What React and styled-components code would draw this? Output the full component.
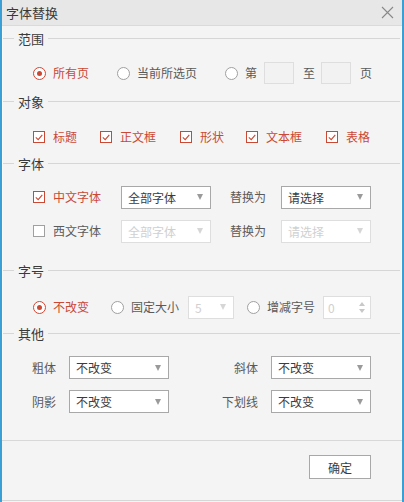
import React from "react";
import styled, { createGlobalStyle, css } from "styled-components";

const RED = "#cb4834";

const GlobalStyle = createGlobalStyle`
  html, body {
    margin: 0;
    padding: 0;
    background: #f4f4f4;
  }
  body {
    font-family: "Noto Sans CJK SC", "Microsoft YaHei", sans-serif;
  }
  * {
    box-sizing: border-box;
  }
`;

const Window = styled.div`
  width: 404px;
  height: 502px;
  display: flex;
  flex-direction: column;
  background: #f4f4f4;
  border-left: 2px solid #3a9fd4;
  border-right: 2px solid #3a9fd4;
  padding-bottom: 1px;
`;

const TitleBar = styled.div`
  height: 26px;
  flex: none;
  display: flex;
  align-items: center;
  justify-content: space-between;
  padding: 0 8px 0 4px;
  background: #e7e7e7;
  border-bottom: 1px solid #dadada;
`;

const Title = styled.span`
  font-size: 13px;
  color: #3a3a3a;
  line-height: 1;
`;

const Close = styled.button`
  width: 14px;
  height: 14px;
  padding: 0;
  border: none;
  background: none;
  display: flex;
  align-items: center;
  justify-content: center;
`;

const Panel = styled.div`
  flex: none;
  padding: 2px 0 27px;
  border-bottom: 1px solid #d8d8d8;
  box-shadow: inset 5px 0 0 -4px #fbfbfb, inset -2px 0 0 -1px #fbfbfb;
`;

const Legend = styled.div`
  display: flex;
  align-items: center;
  height: 20px;
  margin-top: ${(p) => p.$top || 0}px;
  font-size: 13px;
  color: #3a3a3a;

  &::before,
  &::after {
    content: "";
    height: 1px;
    background: #d6d6d6;
  }
  &::before {
    width: 11px;
    margin: 0 4px 0 1px;
  }
  &::after {
    flex: 1;
    margin: 0 2px 0 4px;
  }
`;

const Row = styled.div`
  display: flex;
  align-items: center;
  height: 22px;
  margin-top: ${(p) => p.$top || 0}px;
  padding-left: 31px;
  font-size: 12px;
  color: #5a5a5a;
`;

const Label = styled.span`
  color: ${(p) => (p.$active ? RED : "#5a5a5a")};
  margin-right: ${(p) => p.$gap || 0}px;
  white-space: nowrap;
  line-height: 1;
`;

const Radio = styled.span`
  width: 13px;
  height: 13px;
  border-radius: 50%;
  flex: none;
  background: #fff;
  border: 1px solid ${(p) => (p.$checked ? RED : "#a0a0a0")};
  margin-right: 7px;
  display: flex;
  align-items: center;
  justify-content: center;

  ${(p) =>
    p.$checked &&
    css`
      &::after {
        content: "";
        width: 5px;
        height: 5px;
        border-radius: 50%;
        background: ${RED};
      }
    `}
`;

const Check = styled.span`
  width: 12px;
  height: 12px;
  flex: none;
  background: #fff;
  border: 1px solid ${(p) => (p.$checked ? RED : "#a0a0a0")};
  margin-right: 8px;
  display: flex;
  align-items: center;
  justify-content: center;
`;

const Box = styled.span`
  width: ${(p) => p.$w}px;
  height: 22px;
  flex: none;
  background: #f2f2f2;
  border: 1px solid #dedede;
  margin-right: ${(p) => p.$gap || 0}px;
`;

const Select = styled.div`
  width: ${(p) => p.$w}px;
  height: 23px;
  flex: none;
  display: flex;
  align-items: center;
  justify-content: space-between;
  padding: 0 7px 0 6px;
  background: #fff;
  border: 1px solid ${(p) => (p.$disabled ? "#dedede" : "#a8a8a8")};
  color: ${(p) => (p.$disabled ? "#d0d0d0" : "#3c3c3c")};
  font-size: 12px;
  margin-right: ${(p) => p.$gap || 0}px;

  &::after {
    content: "";
    border-left: 3.5px solid transparent;
    border-right: 3.5px solid transparent;
    border-top: 6px solid ${(p) => (p.$disabled ? "#d6d6d6" : "#9a9a9a")};
  }
`;

const Spin = styled.div`
  width: 48px;
  height: 23px;
  flex: none;
  display: flex;
  align-items: center;
  justify-content: space-between;
  padding: 0 5px 0 4px;
  background: #fff;
  border: 1px solid #dedede;
  color: #d0d0d0;
  font-size: 12px;
`;

const SpinArrows = styled.span`
  display: flex;
  flex-direction: column;
  gap: 3px;
`;

const Arrow = styled.span`
  border-left: 3px solid transparent;
  border-right: 3px solid transparent;
  ${(p) =>
    p.$up
      ? css`border-bottom: 4px solid #c8c8c8;`
      : css`border-top: 4px solid #c8c8c8;`}
`;

const Grid = styled.div`
  display: grid;
  grid-template-columns: 24px 100px 76px 100px;
  column-gap: 13px;
  row-gap: 11px;
  align-items: center;
  margin-top: 13px;
  padding-left: 30px;
  font-size: 12px;
  color: #5a5a5a;
`;

const GridLabel = styled.span`
  text-align: ${(p) => (p.$right ? "right" : "left")};
  white-space: nowrap;
`;

const Footer = styled.div`
  flex: 1;
  display: flex;
  justify-content: flex-end;
  align-items: flex-start;
  padding: 14px 31px 0 0;
  border-bottom: 1px solid #d6d6d6;
`;

const Button = styled.button`
  width: 62px;
  height: 24px;
  background: #fff;
  border: 1px solid #a8a8a8;
  font-family: inherit;
  font-size: 12px;
  color: #3c3c3c;
  padding: 0;
`;

function CheckMark() {
  return (
    <svg width="8" height="7" viewBox="0 0 8 7">
      <path d="M0.8 3.3 L3.2 5.6 L7.3 0.8" fill="none" stroke={RED} strokeWidth="1.1" />
    </svg>
  );
}

function CheckItem({ label, checked = true, gap }) {
  return (
    <>
      <Check $checked={checked}>{checked && <CheckMark />}</Check>
      <Label $active={checked} $gap={gap}>
        {label}
      </Label>
    </>
  );
}

function RadioItem({ label, checked, gap }) {
  return (
    <>
      <Radio $checked={checked} />
      <Label $active={checked} $gap={gap}>
        {label}
      </Label>
    </>
  );
}

export default function App() {
  return (
    <>
      <GlobalStyle />
      <Window>
        <TitleBar>
          <Title>字体替换</Title>
          <Close aria-label="关闭">
            <svg width="13" height="13" viewBox="0 0 13 13">
              <path d="M1 1 L12 12 M12 1 L1 12" stroke="#888" strokeWidth="1.1" />
            </svg>
          </Close>
        </TitleBar>

        <Panel>
          <Legend>范围</Legend>
          <Row $top={14}>
            <RadioItem label="所有页" checked gap={28} />
            <RadioItem label="当前所选页" gap={28} />
            <RadioItem label="第" gap={7} />
            <Box $w={30} $gap={9} />
            <Label $gap={6}>至</Label>
            <Box $w={30} $gap={9} />
            <Label>页</Label>
          </Row>

          <Legend $top={7}>对象</Legend>
          <Row $top={15}>
            <CheckItem label="标题" gap={23} />
            <CheckItem label="正文框" gap={24} />
            <CheckItem label="形状" gap={22} />
            <CheckItem label="文本框" gap={24} />
            <CheckItem label="表格" />
          </Row>

          <Legend $top={5}>字体</Legend>
          <Row $top={13}>
            <CheckItem label="中文字体" gap={20} />
            <Select $w={90} $gap={19}>全部字体</Select>
            <Label $gap={15}>替换为</Label>
            <Select $w={90}>请选择</Select>
          </Row>
          <Row $top={12}>
            <CheckItem label="西文字体" checked={false} gap={20} />
            <Select $w={90} $gap={19} $disabled>
              全部字体
            </Select>
            <Label $gap={15}>替换为</Label>
            <Select $w={90} $disabled>
              请选择
            </Select>
          </Row>

          <Legend $top={18}>字号</Legend>
          <Row $top={16}>
            <RadioItem label="不改变" checked gap={22} />
            <RadioItem label="固定大小" gap={9} />
            <Select $w={46} $gap={13} $disabled>
              5
            </Select>
            <RadioItem label="增减字号" gap={8} />
            <Spin>
              0
              <SpinArrows>
                <Arrow $up />
                <Arrow />
              </SpinArrows>
            </Spin>
          </Row>

          <Legend $top={5}>其他</Legend>
          <Grid>
            <GridLabel>粗体</GridLabel>
            <Select $w={100}>不改变</Select>
            <GridLabel $right>斜体</GridLabel>
            <Select $w={100}>不改变</Select>
            <GridLabel>阴影</GridLabel>
            <Select $w={100}>不改变</Select>
            <GridLabel $right>下划线</GridLabel>
            <Select $w={100}>不改变</Select>
          </Grid>
        </Panel>

        <Footer>
          <Button>确定</Button>
        </Footer>
      </Window>
    </>
  );
}
